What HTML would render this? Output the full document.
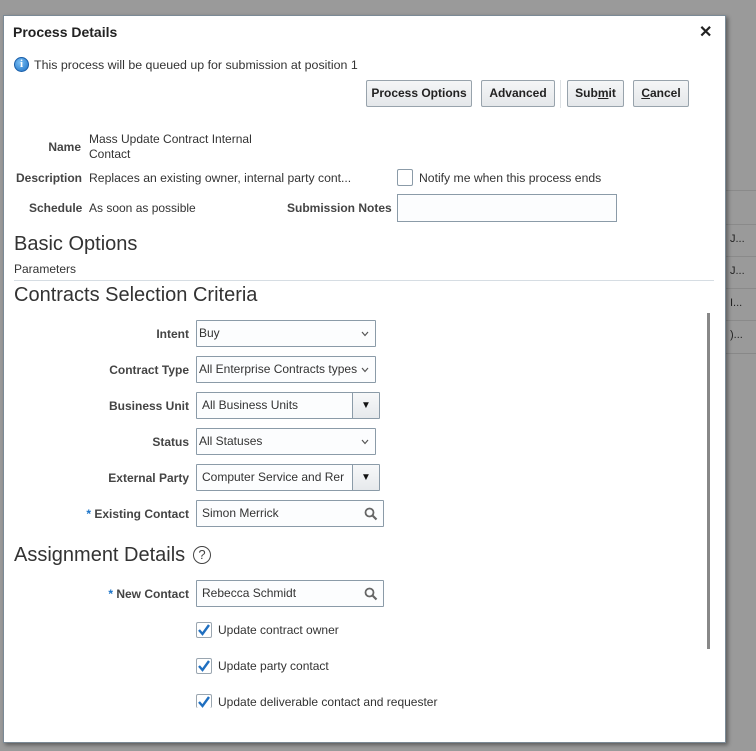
<!DOCTYPE html>
<html style="background:#9a9a9a"><head><style>
*{box-sizing:border-box;margin:0;padding:0}
body{width:756px;height:751px;background:#9a9a9a;font-family:"Liberation Sans",Arial,sans-serif;font-size:12px;color:#333;position:relative;overflow:hidden}
.a{position:absolute;white-space:nowrap}
.dlg{position:absolute;left:3px;top:15px;width:723px;height:728px;background:#fff;border:1px solid #7b8a96;box-shadow:2px 2px 4px rgba(0,0,0,.4)}
.lbl{position:absolute;text-align:right;font-weight:bold;color:#444;width:180px;left:9px}
.btn{position:absolute;top:80px;height:27px;border:1px solid #98a3ac;border-radius:2px;background:linear-gradient(#f5f6f7,#e4e7ea);font-weight:bold;font-size:12px;color:#222;text-align:center;line-height:25px}
.box{position:absolute;left:196px;height:27px;border:1px solid #8b9ba8;background:#fcfdfe;border-radius:1px;line-height:25px;padding-left:2px;color:#333}
.chev{position:absolute;right:5px;top:9px;width:10px;height:8px;background:#fcfdfe}
.dd{position:absolute;right:0;top:0;width:27px;height:25px;border-left:1px solid #8b9ba8;background:linear-gradient(#f7f8f9,#e6e9ec);text-align:center;font-size:10px;line-height:25px;color:#111}
.cb{position:absolute;left:196px;width:16px;height:16px;border:1px solid #9aa6b0;border-radius:2px;background:#fff}
.h{position:absolute;left:14px;font-size:20px;color:#333}
.row{position:absolute;left:726px;width:30px;height:1px;background:#8a8a8a}
</style></head><body>
<div class="row" style="top:190px"></div><div class="row" style="top:224px"></div><div class="row" style="top:256px"></div><div class="row" style="top:288px"></div><div class="row" style="top:320px"></div><div class="row" style="top:353px;background:#888"></div>
<div class="a" style="left:730px;top:233px;font-size:11px;color:#222">J...</div>
<div class="a" style="left:730px;top:265px;font-size:11px;color:#222">J...</div>
<div class="a" style="left:730px;top:297px;font-size:11px;color:#222">I...</div>
<div class="a" style="left:730px;top:329px;font-size:11px;color:#222">)...</div>
<div class="dlg"></div>
<div class="a" style="left:13px;top:24px;font-size:14px;font-weight:bold;color:#222">Process Details</div>
<div class="a" style="left:699px;top:22px;font-size:16px;font-weight:bold;color:#222">✕</div>
<div class="a" style="left:14px;top:57px;width:15px;height:15px;border-radius:50%;background:radial-gradient(circle at 40% 35%,#7cc0f5,#1a6fc4);border:1px solid #1a5ea8;color:#fff;font-size:11px;font-weight:bold;text-align:center;line-height:13px;font-family:'Liberation Serif',serif">i</div>
<div class="a" style="left:34px;top:58px;font-size:12.4px">This process will be queued up for submission at position 1</div>
<div class="btn" style="left:366px;width:106px">Process Options</div>
<div class="btn" style="left:481px;width:74px">Advanced</div>
<div class="a" style="left:560px;top:80px;width:1px;height:28px;background:#dde1e4"></div>
<div class="btn" style="left:567px;width:57px">Sub<u>m</u>it</div>
<div class="btn" style="left:633px;width:56px"><u>C</u>ancel</div>
<div class="a" style="left:20px;top:140px;font-weight:bold;color:#444;width:61px;text-align:right">Name</div>
<div class="a" style="left:89px;top:132px;line-height:15px">Mass Update Contract Internal<br>Contact</div>
<div class="a" style="left:16px;top:171px;font-weight:bold;color:#444">Description</div>
<div class="a" style="left:89px;top:171px;font-size:12.2px">Replaces an existing owner, internal party cont...</div>
<div class="a" style="left:397px;top:169px;width:16px;height:17px;border:1px solid #8b9ba8;border-radius:2px;background:#fff"></div>
<div class="a" style="left:419px;top:171px;font-size:12.2px">Notify me when this process ends</div>
<div class="a" style="left:29px;top:201px;font-weight:bold;color:#444">Schedule</div>
<div class="a" style="left:89px;top:201px">As soon as possible</div>
<div class="a" style="left:287px;top:201px;font-weight:bold;color:#444">Submission Notes</div>
<div class="a" style="left:397px;top:194px;width:220px;height:28px;border:1px solid #8b9ba8;background:#fcfdfe"></div>
<div class="h" style="top:233px">Basic Options</div>
<div class="a" style="left:14px;top:262px">Parameters</div>
<div class="a" style="left:14px;top:280px;width:700px;height:1px;background:#d6dde3"></div>
<div class="h" style="top:284px">Contracts Selection Criteria</div>
<div class="a" style="left:707px;top:313px;width:3px;height:336px;background:#888"></div>
<div class="lbl" style="top:327px">Intent</div>
<div class="box" style="top:320px;width:180px">Buy<svg class="chev" viewBox="0 0 10 8"><path d="M2 2l3 3.5L8 2" fill="none" stroke="#555" stroke-width="1.2"/></svg></div>
<div class="lbl" style="top:363px">Contract Type</div>
<div class="box" style="top:356px;width:180px;overflow:hidden">All Enterprise Contracts types<svg class="chev" viewBox="0 0 10 8"><path d="M2 2l3 3.5L8 2" fill="none" stroke="#555" stroke-width="1.2"/></svg></div>
<div class="lbl" style="top:399px">Business Unit</div>
<div class="box" style="top:392px;width:184px;padding-left:5px">All Business Units<span class="dd">▼</span></div>
<div class="lbl" style="top:435px">Status</div>
<div class="box" style="top:428px;width:180px">All Statuses<svg class="chev" viewBox="0 0 10 8"><path d="M2 2l3 3.5L8 2" fill="none" stroke="#555" stroke-width="1.2"/></svg></div>
<div class="lbl" style="top:471px">External Party</div>
<div class="box" style="top:464px;width:184px;padding-left:5px;overflow:hidden">Computer Service and Rer<span class="dd">▼</span></div>
<div class="lbl" style="top:507px"><span style="color:#1a73c8">*</span> Existing Contact</div>
<div class="box" style="top:500px;width:188px;padding-left:5px">Simon Merrick<svg class="a" style="right:5px;top:6px" width="14" height="14" viewBox="0 0 14 14"><circle cx="5.5" cy="5.5" r="4" fill="none" stroke="#666" stroke-width="1.8"/><path d="M8.5 8.5L12.5 12.5" stroke="#666" stroke-width="2.2"/></svg></div>
<div class="h" style="top:544px">Assignment Details</div>
<div class="a" style="left:193px;top:546px;width:18px;height:18px;border:1.3px solid #444;border-radius:50%;text-align:center;font-size:13px;line-height:16px;color:#444">?</div>
<div class="lbl" style="top:587px"><span style="color:#1a73c8">*</span> New Contact</div>
<div class="box" style="top:580px;width:188px;padding-left:5px">Rebecca Schmidt<svg class="a" style="right:5px;top:6px" width="14" height="14" viewBox="0 0 14 14"><circle cx="5.5" cy="5.5" r="4" fill="none" stroke="#666" stroke-width="1.8"/><path d="M8.5 8.5L12.5 12.5" stroke="#666" stroke-width="2.2"/></svg></div>
<div class="cb" style="top:622px"><svg width="14" height="14" viewBox="0 0 14 14"><path d="M2 7l3.5 4L12 2" fill="none" stroke="#1f6fc0" stroke-width="2.4"/></svg></div>
<div class="a" style="left:218px;top:623px">Update contract owner</div>
<div class="cb" style="top:658px"><svg width="14" height="14" viewBox="0 0 14 14"><path d="M2 7l3.5 4L12 2" fill="none" stroke="#1f6fc0" stroke-width="2.4"/></svg></div>
<div class="a" style="left:218px;top:659px">Update party contact</div>
<div class="cb" style="top:694px;height:14px;border-bottom:none"><svg width="14" height="14" viewBox="0 0 14 14"><path d="M2 7l3.5 4L12 2" fill="none" stroke="#1f6fc0" stroke-width="2.4"/></svg></div>
<div class="a" style="left:218px;top:695px">Update deliverable contact and requester</div>
</body></html>
